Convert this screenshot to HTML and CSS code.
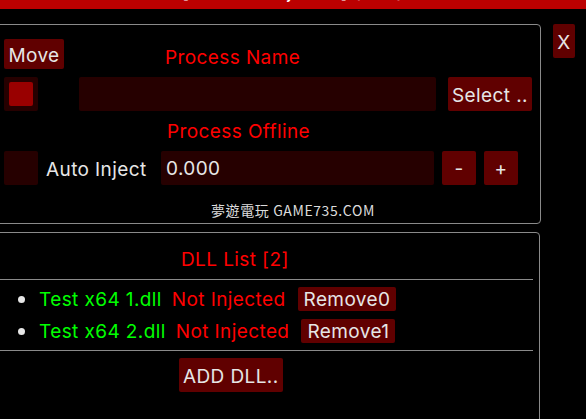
FILE: index.html
```html
<!DOCTYPE html>
<html lang="en">
<head>
  <meta charset="UTF-8" />
  <title>Injector</title>
  <link rel="stylesheet" href="styles.css">
</head>
<body>

  <div class="titlebar"><span>[Process Injector] (x64)</span></div>

  <div class="main">
    <!-- Process panel -->
    <div class="panel panel-top">
      <div class="row row-move">
        <button class="btn btn-move">Move</button>
        <span class="label label-name">Process Name</span>
      </div>
      <div class="row row-select">
        <div class="check"><div class="check-mark"></div></div>
        <div class="input input-name"></div>
        <button class="btn btn-select">Select ..</button>
      </div>
      <div class="row row-offline">
        <span class="label label-offline">Process Offline</span>
      </div>
      <div class="row row-auto">
        <div class="check"></div>
        <span class="text auto-text">Auto Inject</span>
        <div class="input input-delay">0.000</div>
        <button class="btn btn-step">-</button>
        <button class="btn btn-step">+</button>
      </div>
      <div class="watermark">夢遊電玩 GAME735.COM</div>
    </div>

    <button class="btn btn-close">X</button>
  </div>

  <!-- DLL panel -->
  <div class="panel panel-dll">
    <div class="dll-title">DLL List [2]</div>
    <div class="sep"></div>
    <ul class="dll-list">
      <li class="dll-item">
        <span class="bullet"></span>
        <span class="dll-name">Test x64 1.dll</span>
        <span class="dll-status">Not Injected</span>
        <button class="btn btn-remove">Remove0</button>
      </li>
      <li class="dll-item">
        <span class="bullet"></span>
        <span class="dll-name">Test x64 2.dll</span>
        <span class="dll-status">Not Injected</span>
        <button class="btn btn-remove">Remove1</button>
      </li>
    </ul>
    <div class="sep"></div>
    <div class="add-row">
      <button class="btn btn-add">ADD DLL..</button>
    </div>
  </div>

</body>
</html>
```

FILE: styles.css
```css
/* Basic Reset */
* {
  margin: 0;
  padding: 0;
  box-sizing: border-box;
}

body {
  font-family: Inter, "Noto Sans", sans-serif;
  font-size: 19px;
  letter-spacing: 0.4px;
  background-color: #000;
  color: #e6e6e6;
  width: 586px;
  height: 419px;
  overflow: hidden;
}

/* Title bar (cut off at top) */
.titlebar {
  height: 9px;
  background-color: #bb0000;
  overflow: hidden;
  text-align: center;
}

.titlebar span {
  display: block;
  margin-top: -18px;
  line-height: 20px;
  color: #fff;
}

/* Generic bits */
.btn {
  font-family: inherit;
  font-size: 19px;
  letter-spacing: 0.4px;
  color: #e6e6e6;
  background-color: #600000;
  border: none;
  border-radius: 2px;
  cursor: pointer;
  line-height: 1;
  white-space: nowrap;
}

.label {
  color: #ff0000;
}

.check {
  width: 34px;
  height: 34px;
  background-color: #260000;
  border-radius: 2px;
  padding: 5px;
  flex-shrink: 0;
}

.check-mark {
  width: 24px;
  height: 24px;
  background-color: #990000;
  border-radius: 2px;
}

.input {
  height: 34px;
  background-color: #260000;
  border-radius: 2px;
  padding: 0 5px;
  line-height: 36px;
  flex-shrink: 0;
}

.row {
  display: flex;
  align-items: center;
}

/* Panels */
.main {
  display: flex;
  align-items: flex-start;
  padding-top: 15px;
}

.panel {
  border: 1px solid #8a8a8a;
  border-radius: 4px;
  margin-left: -20px;
  padding-left: 23px;
}

.panel-top {
  width: 561px;
  height: 200px;
  padding-top: 14px;
}

.btn-close {
  width: 22px;
  height: 34px;
  margin-left: 12px;
  padding-top: 2px;
}

/* Process panel rows */
.row-move {
  height: 30px;
}

.btn-move {
  width: 60px;
  height: 30px;
  padding-top: 3px;
}

.label-name {
  margin-left: 101px;
  margin-top: 6px;
}

.row-select {
  margin-top: 8px;
}

.input-name {
  width: 357px;
  margin-left: 41px;
}

.btn-select {
  width: 84px;
  height: 34px;
  margin-left: 12px;
  padding-top: 2px;
}

.row-offline {
  height: 40px;
  padding-left: 163px;
}

.auto-text {
  width: 123px;
  padding-left: 8px;
  padding-top: 2px;
  flex-shrink: 0;
}

.input-delay {
  width: 273px;
}

.btn-step {
  width: 34px;
  height: 34px;
  margin-left: 8px;
}

.watermark {
  font-family: "Noto Sans CJK TC", "Noto Sans", sans-serif;
  font-size: 14px;
  letter-spacing: 0.6px;
  color: #dcdcdc;
  margin-top: 15px;
  padding-left: 207px;
}

/* DLL panel */
.panel-dll {
  width: 560px;
  height: 200px;
  margin-top: 8px;
  padding-left: 0;
}

.dll-title {
  color: #ff0000;
  margin-top: 15px;
  height: 31px;
  padding-left: 200px;
}

.sep {
  height: 1px;
  background-color: #8a8a8a;
  width: 552px;
}

.dll-list {
  list-style: none;
  padding: 7px 0;
}

.dll-item {
  display: flex;
  align-items: center;
  height: 24px;
  margin-bottom: 8px;
  padding-left: 37px;
}

.dll-item:last-child {
  margin-bottom: 0;
}

.bullet {
  width: 7px;
  height: 7px;
  border-radius: 50%;
  background-color: #e6e6e6;
  margin-right: 14px;
}

.dll-name {
  color: #00ff00;
}

.dll-status {
  color: #ff0000;
  margin-left: 10px;
}

.btn-remove {
  height: 24px;
  padding: 1px 6px 0;
  margin-left: 12px;
}

.add-row {
  padding-left: 198px;
  padding-top: 7px;
}

.btn-add {
  height: 34px;
  padding: 2px 4px 0;
}
```
